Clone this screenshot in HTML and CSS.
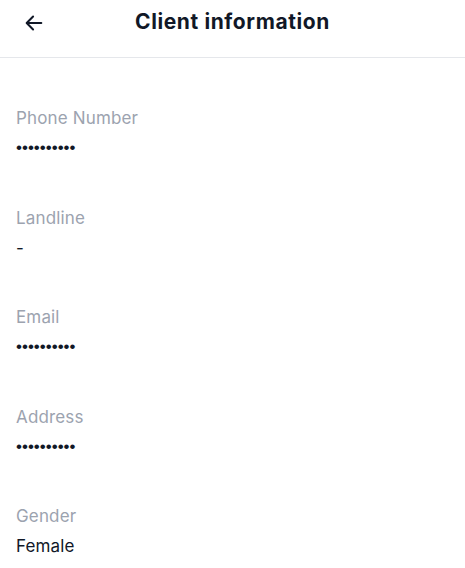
FILE: index.html
```html
<!DOCTYPE html>
<html>
<head>
<meta charset="utf-8">
<link rel="stylesheet" href="styles.css">
</head>
<body>
<div class="header">
  <button class="back" aria-label="Back">
    <svg width="22" height="22" viewBox="0 0 24 24" fill="none" stroke="#111827" stroke-width="2.2" stroke-linecap="round" stroke-linejoin="round"><path d="M20 12H4.5"/><path d="M11 5l-7 7 7 7"/></svg>
  </button>
  <h1 class="title">Client information</h1>
</div>
<div class="list">
  <div class="field"><div class="label">Phone Number</div><div class="value masked">••••••••••</div></div>
  <div class="field"><div class="label">Landline</div><div class="value">-</div></div>
  <div class="field"><div class="label">Email</div><div class="value masked">••••••••••</div></div>
  <div class="field"><div class="label">Address</div><div class="value masked">••••••••••</div></div>
  <div class="field"><div class="label">Gender</div><div class="value">Female</div></div>
</div>
</body>
</html>
```
FILE: styles.css
```css
html, body { margin: 0; padding: 0; background: #fff; }
body { font-family: Inter, "Noto Sans", sans-serif; color: #111827; }
.header {
  height: 44px;
  padding-bottom: 13px;
  border-bottom: 1px solid #e5e7eb;
  display: flex;
  align-items: center;
  justify-content: center;
  position: relative;
}
.back {
  position: absolute;
  left: 23px;
  top: 12px;
  background: none;
  border: 0;
  padding: 0;
  width: 22px;
  height: 22px;
  display: flex;
}
.title {
  margin: 0;
  font-size: 21px;
  font-weight: 700;
  letter-spacing: 0.6px;
  line-height: 44px;
  color: #111827;
}
.list {
  padding: 48px 16px 0;
  display: flex;
  flex-direction: column;
  gap: 45.5px;
}
.field { display: flex; flex-direction: column; gap: 6px; }
.label { font-size: 17px; line-height: 24px; letter-spacing: 0.15px; color: #9ca3af; }
.value { font-size: 17px; line-height: 24px; letter-spacing: 0.15px; color: #111827; }
.masked { font-family: "Liberation Sans", Arial, sans-serif; letter-spacing: 0; }
```
